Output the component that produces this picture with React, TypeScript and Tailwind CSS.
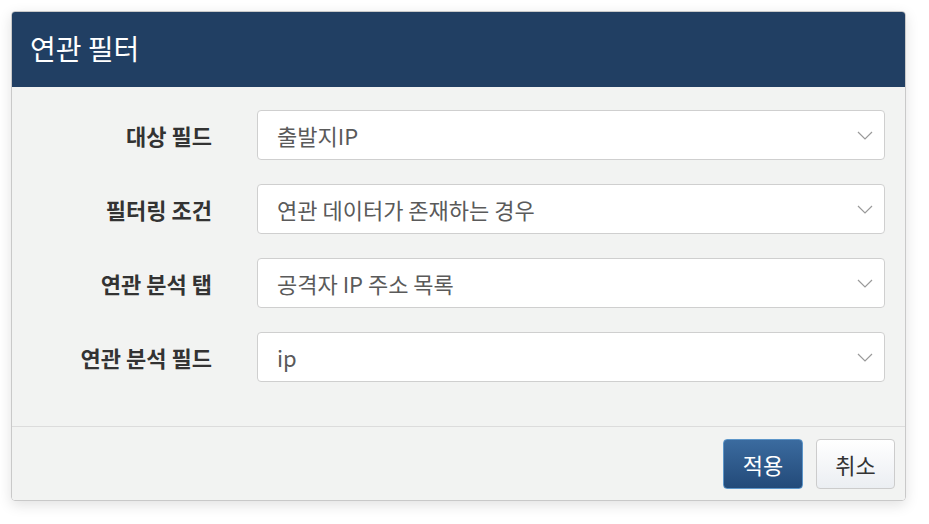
import React from 'react';

const FONT = { fontFamily: '"Noto Sans CJK KR", "Noto Sans", sans-serif' };

const ROWS = [
  { label: '대상 필드', value: '출발지IP' },
  { label: '필터링 조건', value: '연관 데이터가 존재하는 경우' },
  { label: '연관 분석 탭', value: '공격자 IP 주소 목록' },
  { label: '연관 분석 필드', value: 'ip' },
];

function Chevron() {
  return (
    <svg width="16" height="9" viewBox="0 0 16 9" className="shrink-0">
      <polyline points="1,1 8,8 15,1" fill="none" stroke="#9a9a9a" strokeWidth="1.2" />
    </svg>
  );
}

function SelectRow({ label, value }: { label: string; value: string }) {
  return (
    <div className="flex items-center gap-[45px]">
      <div className="w-[200px] text-right text-[22px] leading-none font-bold text-[#333] whitespace-nowrap">{label}</div>
      <div className="flex-1 h-[50px] bg-white border border-[#cfcfcf] rounded-[4px] flex items-center justify-between pl-[19px] pr-[11px]">
        <span className="text-[22px] leading-none text-[#5a5a5a]">{value}</span>
        <Chevron />
      </div>
    </div>
  );
}

export default function App() {
  return (
    <div className="w-[929px] h-[524px] bg-white pt-[11px] pl-[11px]" style={FONT}>
      <div className="w-[895px] rounded-[4px] border border-[#c9c9c9] overflow-hidden shadow-[0_4px_14px_rgba(0,0,0,0.12)]">
        <div className="h-[75px] bg-[#213f63] flex items-center px-[18px] pb-[4px]">
          <span className="text-white text-[28px] leading-none">연관 필터</span>
        </div>
        <div className="bg-[#f2f3f2] pt-[23px] pb-[44px] pr-[20px] flex flex-col gap-[24px]">
          {ROWS.map((r) => (
            <SelectRow key={r.label} label={r.label} value={r.value} />
          ))}
        </div>
        <div className="bg-[#f2f3f2] border-t border-[#dcdcdc] pt-[12px] pb-[11px] pr-[10px] flex justify-end gap-[13px]">
          <button className="w-[80px] h-[50px] rounded-[4px] border border-[#5d96c9] bg-gradient-to-b from-[#3b6b9f] to-[#234a79] text-white text-[22px] leading-none">
            적용
          </button>
          <button className="w-[79px] h-[50px] rounded-[4px] border border-[#cccccc] bg-gradient-to-b from-white to-[#ebeef2] text-[#333] text-[22px] leading-none">
            취소
          </button>
        </div>
      </div>
    </div>
  );
}
